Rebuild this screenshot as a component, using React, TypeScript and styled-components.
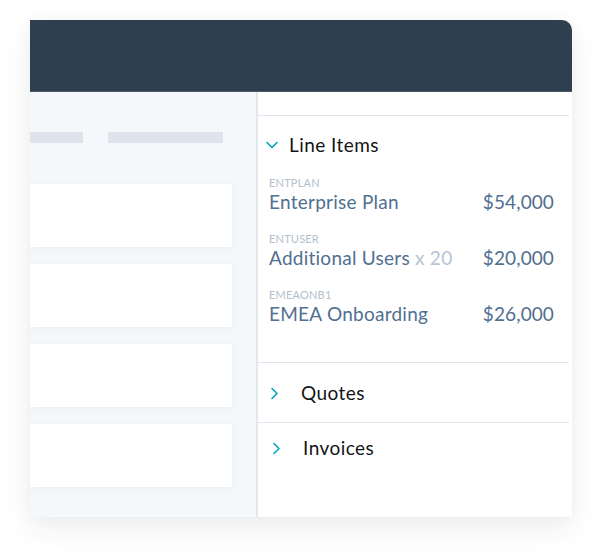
import React from "react";
import styled, { createGlobalStyle } from "styled-components";

const Global = createGlobalStyle`
  html, body { margin: 0; padding: 0; background: #ffffff; }
  body { font-family: Lato, "Noto Sans", sans-serif; }
  * { box-sizing: border-box; }
`;

const Page = styled.div`
  width: 600px;
  height: 556px;
  padding: 20px 28px 39px 30px;
  background: #ffffff;
`;

const Card = styled.div`
  width: 542px;
  height: 497px;
  display: flex;
  flex-direction: column;
  border-radius: 0 10px 0 0;
  overflow: hidden;
  background: #ffffff;
  box-shadow: 0 12px 28px rgba(30, 40, 60, 0.07), 0 0 18px rgba(30, 40, 60, 0.04);
`;

const Header = styled.div`
  height: 72px;
  flex: none;
  background: #2e3f50;
  border-bottom: 1px solid #4a5a6a;
`;

const Body = styled.div`
  flex: 1;
  display: flex;
`;

const LeftPanel = styled.div`
  width: 226px;
  flex: none;
  background: #f5f8fa;
  padding-top: 40px;
  display: flex;
  flex-direction: column;
`;

const BarRow = styled.div`
  display: flex;
  gap: 25px;
  height: 11px;
  margin-bottom: 41px;
`;

const Bar = styled.div<{ $w: number }>`
  width: ${(p) => p.$w}px;
  height: 11px;
  background: #dfe3eb;
`;

const Cards = styled.div`
  display: flex;
  flex-direction: column;
  gap: 17px;
`;

const Placeholder = styled.div`
  width: 202px;
  height: 63px;
  background: #ffffff;
  box-shadow: 0 2px 8px rgba(40, 60, 90, 0.05);
`;

const Divider = styled.div`
  width: 2px;
  flex: none;
  background: #e3e8ee;
`;

const RightPanel = styled.div`
  flex: 1;
  padding-top: 23px;
  display: flex;
  flex-direction: column;
`;

const Section = styled.div<{ $h?: number }>`
  border-top: 1px solid #dfe5ec;
  margin-right: 3px;
  ${(p) => (p.$h ? `height: ${p.$h}px;` : "")}
`;

const SectionHead = styled.div<{ $pad: number; $indent: number; $gap: number }>`
  display: flex;
  align-items: center;
  gap: ${(p) => p.$gap}px;
  padding: ${(p) => p.$pad}px 0 0 ${(p) => p.$indent}px;
`;

const Title = styled.span`
  font-size: 19px;
  line-height: 24px;
  color: #141414;
  letter-spacing: 0.45px;
`;

const Items = styled.div`
  display: flex;
  flex-direction: column;
  gap: 18px;
  padding: 19px 15px 36px 11px;
`;

const Item = styled.div`
  display: flex;
  flex-direction: column;
`;

const Sku = styled.div`
  font-size: 11px;
  line-height: 14px;
  color: #b3bfcc;
  letter-spacing: 0.2px;
`;

const ItemLine = styled.div`
  display: flex;
  justify-content: space-between;
  align-items: baseline;
`;

const Name = styled.span`
  font-size: 19px;
  line-height: 24px;
  color: #516f90;
  letter-spacing: 0.25px;
`;

const Qty = styled.span`
  color: #b6c4d3;
`;

const Price = styled.span`
  font-size: 19px;
  line-height: 24px;
  color: #516f90;
  letter-spacing: 0.1px;
`;

const Chevron = ({ dir }: { dir: "down" | "right" }) =>
  dir === "down" ? (
    <svg width="12" height="8" viewBox="0 0 12 8" fill="none">
      <polyline points="1,1.5 6,6.5 11,1.5" stroke="#00a4bd" strokeWidth="1.6" strokeLinecap="round" strokeLinejoin="round" />
    </svg>
  ) : (
    <svg width="9" height="13" viewBox="0 0 9 13" fill="none">
      <polyline points="2,1.5 7,6.5 2,11.5" stroke="#00a4bd" strokeWidth="1.6" strokeLinecap="round" strokeLinejoin="round" />
    </svg>
  );

const items = [
  { sku: "ENTPLAN", name: "Enterprise Plan", qty: "", price: "$54,000" },
  { sku: "ENTUSER", name: "Additional Users", qty: "x 20", price: "$20,000" },
  { sku: "EMEAONB1", name: "EMEA Onboarding", qty: "", price: "$26,000" },
];

export default function App() {
  return (
    <>
      <Global />
      <Page>
        <Card>
          <Header />
          <Body>
            <LeftPanel>
              <BarRow>
                <Bar $w={53} />
                <Bar $w={115} />
              </BarRow>
              <Cards>
                <Placeholder />
                <Placeholder />
                <Placeholder />
                <Placeholder />
              </Cards>
            </LeftPanel>
            <Divider />
            <RightPanel>
              <Section>
                <SectionHead $pad={17} $indent={8} $gap={11}>
                  <Chevron dir="down" />
                  <Title>Line Items</Title>
                </SectionHead>
                <Items>
                  {items.map((it) => (
                    <Item key={it.sku}>
                      <Sku>{it.sku}</Sku>
                      <ItemLine>
                        <Name>
                          {it.name}
                          {it.qty && <Qty> {it.qty}</Qty>}
                        </Name>
                        <Price>{it.price}</Price>
                      </ItemLine>
                    </Item>
                  ))}
                </Items>
              </Section>
              <Section $h={60}>
                <SectionHead $pad={18} $indent={12} $gap={22}>
                  <Chevron dir="right" />
                  <Title>Quotes</Title>
                </SectionHead>
              </Section>
              <Section>
                <SectionHead $pad={13} $indent={14} $gap={22}>
                  <Chevron dir="right" />
                  <Title>Invoices</Title>
                </SectionHead>
              </Section>
            </RightPanel>
          </Body>
        </Card>
      </Page>
    </>
  );
}
